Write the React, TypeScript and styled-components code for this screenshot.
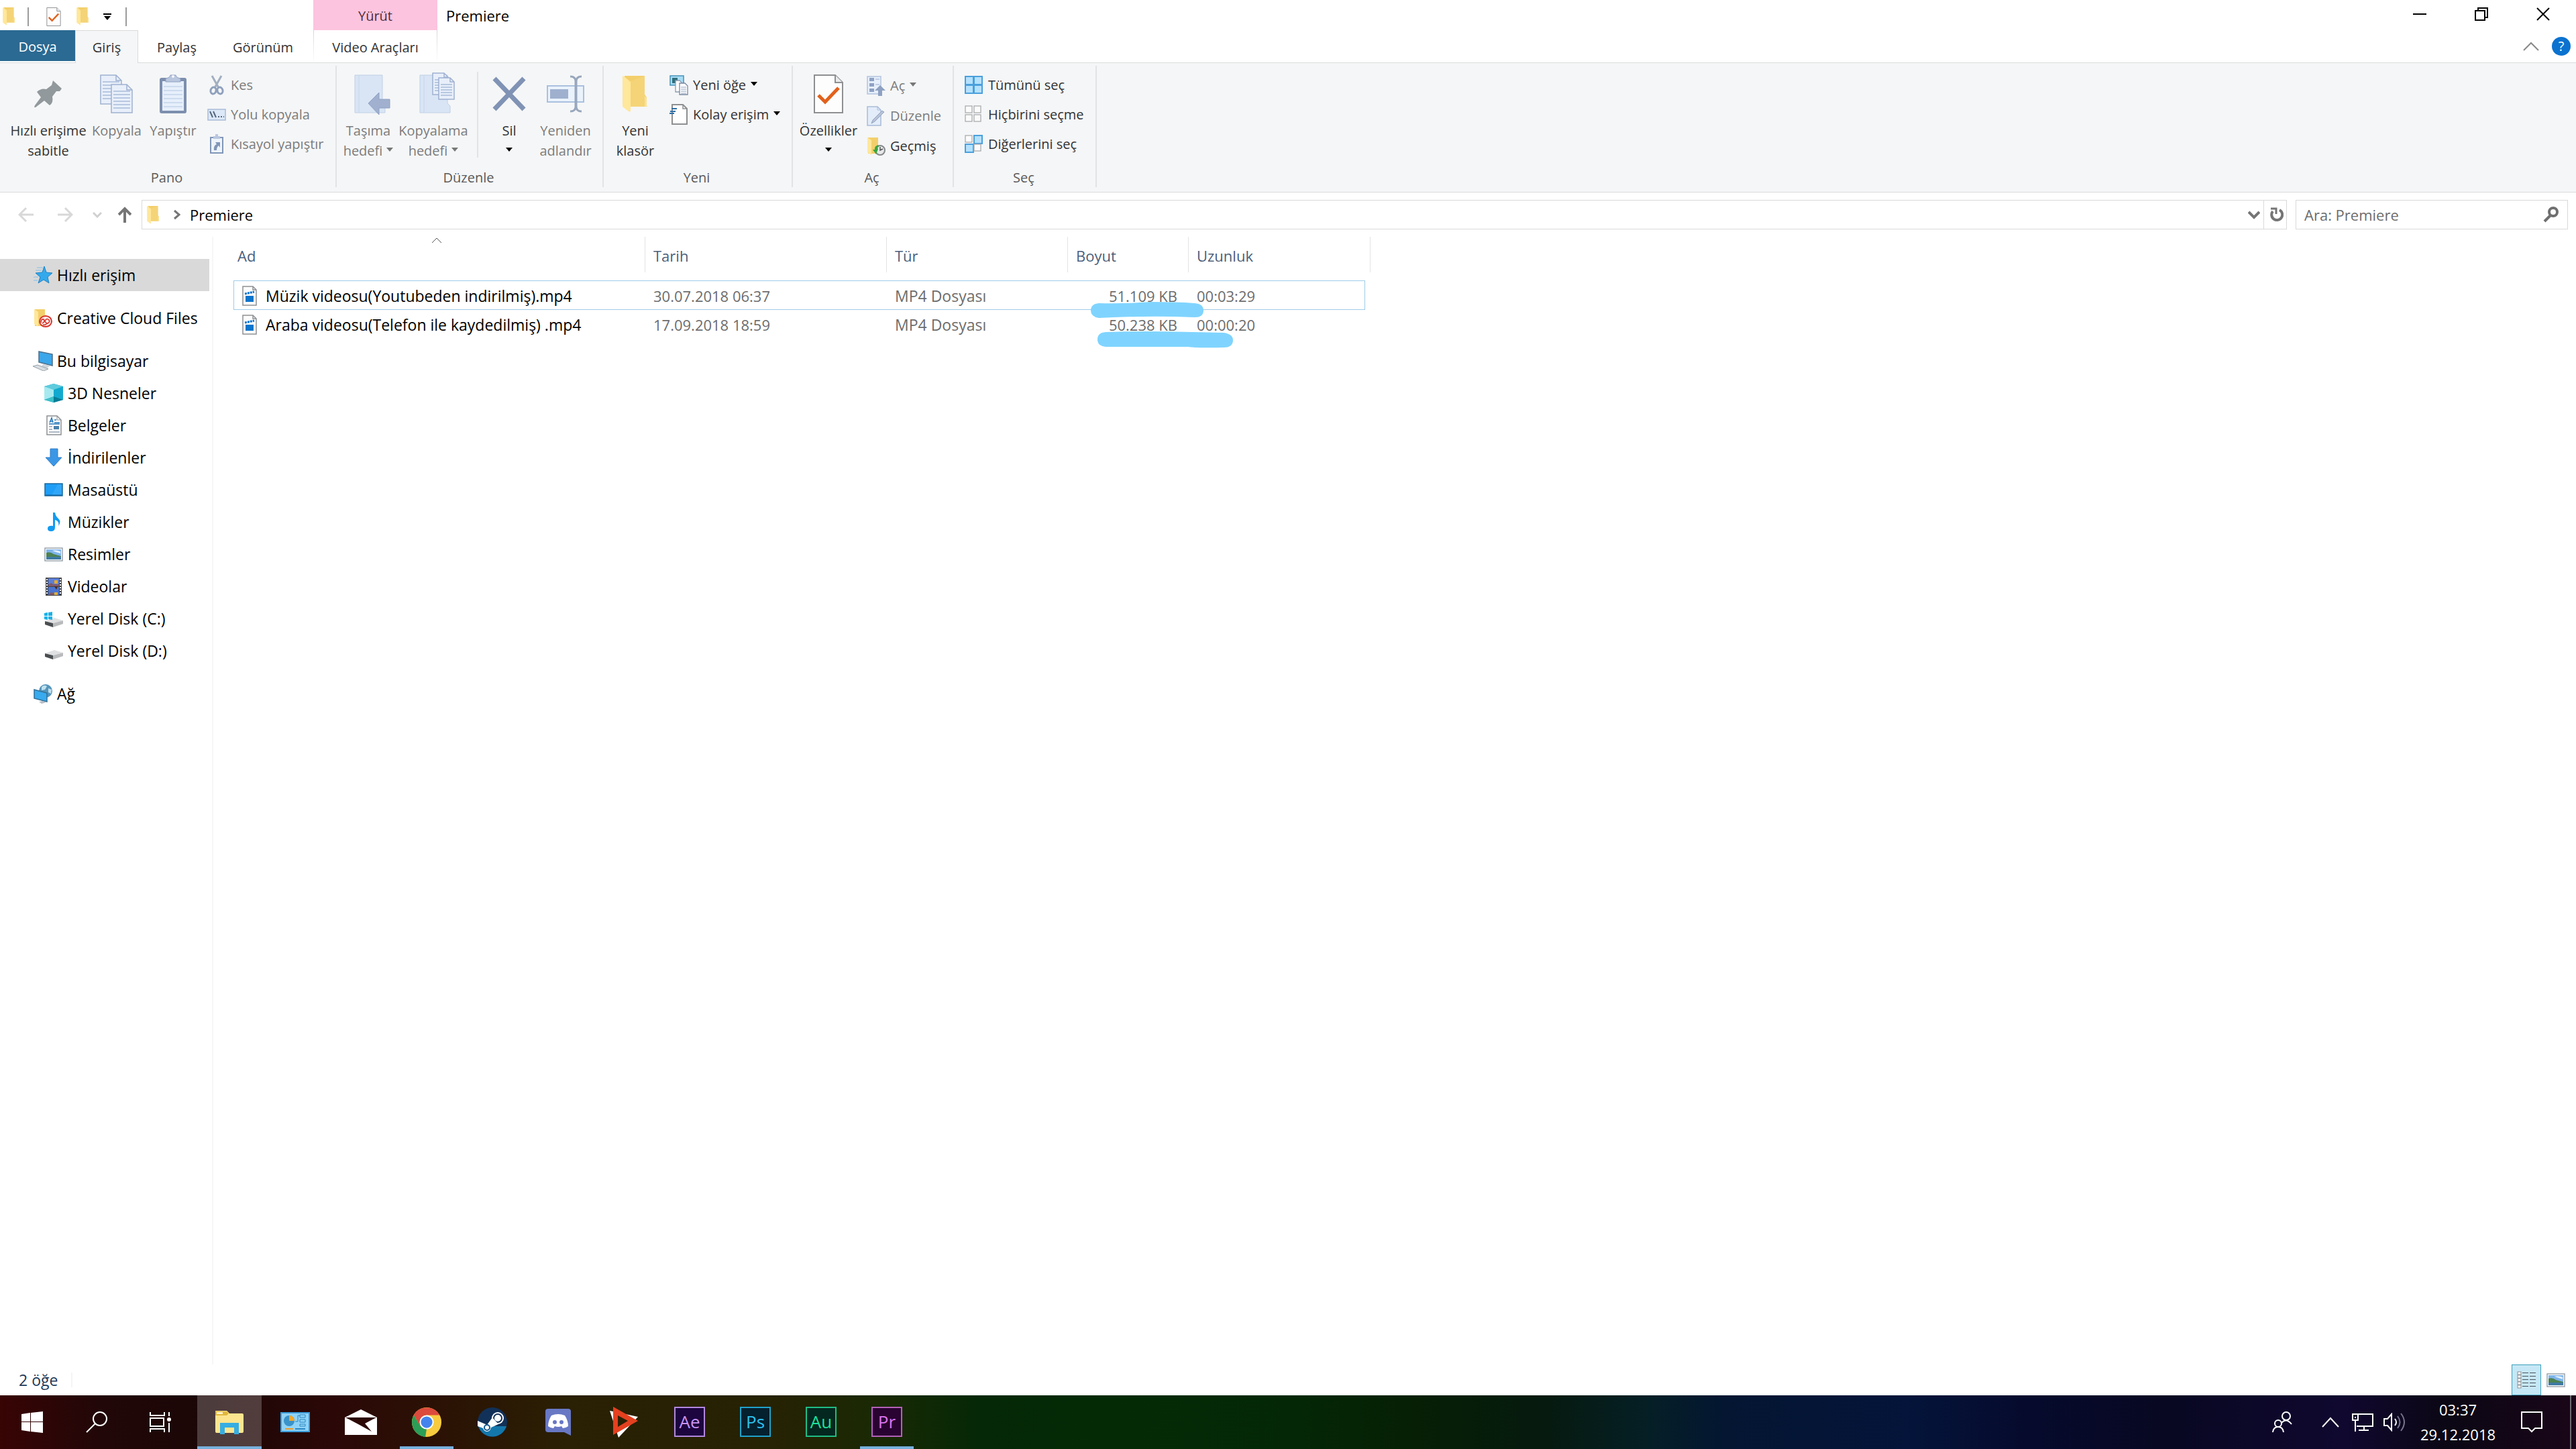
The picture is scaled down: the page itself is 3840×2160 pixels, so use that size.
import React, { ReactNode } from "react";
import styled, { createGlobalStyle, css } from "styled-components";

const GlobalStyle = createGlobalStyle`
  *, *::before, *::after { box-sizing: border-box; }
  html, body { margin: 0; background: #fff; }
  body, button, input, table {
    font-family: "Open Sans", "Noto Sans", "Segoe UI", sans-serif;
    font-size: 22px;
    line-height: 30px;
    color: #000;
  }
  button { border: 0; padding: 0; background: none; cursor: default; }
  svg { display: block; flex: none; }
`;

const Window = styled.div`
  display: flex;
  flex-direction: column;
  min-height: 100vh;
`;

/* ---------- icons ---------- */

type IconProps = { w: number; h: number; box?: string; children?: ReactNode };
const Icon = ({ w, h, box, children }: IconProps) => (
  <svg width={w} height={h} viewBox={box ?? `0 0 ${w} ${h}`} fill="none" aria-hidden="true">
    {children}
  </svg>
);

const FolderShape = () => (
  <>
    <path d="M3 0H33V28L36 32V45Q36 46 34 46H3Z" fill="#f3cf6b" />
    <path d="M12 8L33 0V46H12Z" fill="#f5d477" />
    <path d="M33 30L36 33V45L38 46H33Z" fill="#fbe293" />
    <path d="M1 0L12 9V51Q12 55 9 53L0 46V1Z" fill="#ffe79b" />
  </>
);
const Folder = ({ w, h }: { w: number; h: number }) => (
  <Icon w={w} h={h} box="0 0 38 55"><FolderShape /></Icon>
);

const CheckPage = ({ w, h }: { w: number; h: number }) => (
  <Icon w={w} h={h} box="0 0 44 58">
    <path d="M1 1H32L43 12V57H1Z" fill="#fdfdfd" stroke="#8d8f91" strokeWidth="2" />
    <path d="M32 1V12H43" fill="#e9eaeb" stroke="#8d8f91" strokeWidth="2" />
    <path d="M7 31L17 41L37 20" stroke="#e2611c" strokeWidth="5" />
  </Icon>
);

const Pin = () => (
  <Icon w={42} h={42}>
    <path d="M28 1L41 13L38 17L33 17L27 25Q29 34 23 38L15 31L2 41L0 41L1 38L10 26L4 18Q10 12 18 14L26 8Z" fill="#92999d" />
  </Icon>
);

const DocLines = ({ x, y, w, h, gap = 5 }: { x: number; y: number; w: number; h: number; gap?: number }) => {
  const lines: number[] = [];
  for (let i = 10; i < h - 3; i += gap) lines.push(y + i);
  const f = Math.round(w / 4);
  return (
    <>
      <path d={`M${x} ${y}H${x + w - f}L${x + w} ${y + f}V${y + h}H${x}Z`} fill="#e8effa" stroke="#9fb1d1" strokeWidth="1.5" />
      <path d={`M${x + w - f} ${y}V${y + f}H${x + w}`} stroke="#9fb1d1" strokeWidth="1.5" />
      {lines.map((l) => (
        <path key={l} d={`M${x + 3} ${l}H${x + w - 3}`} stroke="#a9bbd9" strokeWidth="1.5" />
      ))}
    </>
  );
};

const CopyBig = () => (
  <Icon w={50} h={60}>
    <DocLines x={1} y={2} w={31} h={43} />
    <DocLines x={17} y={16} w={31} h={42} />
  </Icon>
);

const PasteBig = () => (
  <Icon w={42} h={60}>
    <rect x="1" y="6" width="40" height="53" rx="3" fill="#7d8fae" />
    <rect x="5" y="11" width="32" height="44" fill="#e6effb" />
    {[19, 25, 31, 37, 43, 49].map((y) => <path key={y} d={`M7 ${y}H35`} stroke="#c5d4ea" strokeWidth="1.5" />)}
    <path d="M10 12V7Q16 6 17 2H25Q26 6 32 7V12Z" fill="#b9c6de" stroke="#8ea0c0" />
    <circle cx="21" cy="4" r="2" fill="#f5f6f7" />
  </Icon>
);

const Scissors = () => (
  <Icon w={28} h={30}>
    <path d="M7 1L17 19M21 1L11 19" stroke="#a3afc1" strokeWidth="3" />
    <ellipse cx="9" cy="23" rx="4" ry="5" stroke="#8fa0bd" strokeWidth="3" transform="rotate(15 9 23)" />
    <ellipse cx="19" cy="23" rx="4" ry="5" stroke="#8fa0bd" strokeWidth="3" transform="rotate(-15 19 23)" />
  </Icon>
);

const PathIcon = () => (
  <Icon w={28} h={18}>
    <rect x="1" y="1" width="26" height="16" fill="#dce8f7" stroke="#a9bbd9" strokeWidth="1.5" />
    <path d="M4 4L8 13M9 4L13 13" stroke="#56677f" strokeWidth="2" />
    <path d="M16 12h2M20 12h2M24 12h1" stroke="#56677f" strokeWidth="2" />
  </Icon>
);

const ShortcutIcon = () => (
  <Icon w={28} h={30}>
    <path d="M5 5H23V28H5Z" fill="#eef4fc" stroke="#8196b8" strokeWidth="2" />
    <path d="M9 7V3H12V0H16V3H19V7Z" fill="#b9c6de" />
    <path d="M10 24Q9 17 14 15L12 12H19V20L17 17Q14 19 14 24Z" fill="#8196b8" />
  </Icon>
);

const PaleFolder = ({ x }: { x: number }) => (
  <>
    <path d={`M${x} 4H${x + 41}V46L${x + 45} 50V60H${x}Z`} fill="#d9e5f5" stroke="#c0cfe6" />
    <path d={`M${x + 6} 4V60`} stroke="#c8d6ea" />
  </>
);
const MoveTo = () => (
  <Icon w={66} h={64} box="-12 0 66 64">
    <PaleFolder x={1} />
    <path d="M21 46L37 30V40H53V53H37V63Z" fill="#a0b0ce" stroke="#8fa2c3" />
  </Icon>
);
const CopyTo = () => (
  <Icon w={66} h={64} box="-12 0 66 64">
    <PaleFolder x={1} />
    <DocLines x={20} y={1} w={23} h={32} gap={4} />
    <DocLines x={29} y={8} w={23} h={32} gap={4} />
  </Icon>
);
const DeleteIcon = () => (
  <Icon w={50} h={52}>
    <path d="M3 3L47 49M47 3L3 49" stroke="#8093b5" strokeWidth="7" />
  </Icon>
);
const RenameIcon = () => (
  <Icon w={58} h={58}>
    <rect x="2" y="17" width="54" height="24" fill="#eaf2fc" stroke="#a9c0df" strokeWidth="2" />
    <rect x="6" y="22" width="27" height="14" fill="#9fb0cf" />
    <path d="M36 3Q44 3 44 10V48Q44 55 36 55M53 3Q45 3 45 10V48Q45 55 53 55" stroke="#98a7bd" strokeWidth="3" />
  </Icon>
);
const NewItem = () => (
  <Icon w={28} h={30}>
    <rect x="1" y="1" width="20" height="14" fill="#a8dcf5" stroke="#4792b8" strokeWidth="1.5" />
    <rect x="4" y="4" width="8" height="8" fill="#2f6f7c" />
    <path d="M9 8H15L19 12V25H9Z" fill="#fff" stroke="#8b9bb0" strokeWidth="1.3" />
    <path d="M15 12H23L27 16V29H15Z" fill="#fff" stroke="#7888a0" strokeWidth="1.3" />
    <path d="M17 18H25M17 21H25M17 24H25M17 27H25" stroke="#8ea3c0" />
  </Icon>
);
const EasyAccess = () => (
  <Icon w={28} h={32}>
    <path d="M4 1H20L26 7V30H4Z" fill="#fff" stroke="#8d8f91" strokeWidth="2" />
    <path d="M20 1V7H26" stroke="#8d8f91" strokeWidth="1.5" />
    <path d="M3 7H11M1 11H9M0 14H7" stroke="#2c6ea5" strokeWidth="2" />
  </Icon>
);
const OpenIcon = () => (
  <Icon w={28} h={30}>
    <rect x="1" y="1" width="20" height="26" fill="#e6effb" stroke="#b3c3de" strokeWidth="1.5" />
    <path d="M4 3h7v5H4zM4 11h7v5H4zM4 19h7v5H4z" fill="#8fa2c3" />
    <path d="M13 5h6M13 13h6" stroke="#b3c3de" strokeWidth="1.5" />
    <path d="M20 14L28 22H23V30H17V22H12Z" fill="#8ea1c2" />
  </Icon>
);
const EditIcon = () => (
  <Icon w={28} h={30}>
    <path d="M1 1H16L21 6V29H1Z" fill="#e3ecf9" stroke="#a9bbd9" strokeWidth="1.5" />
    <path d="M16 1V6H21" stroke="#a9bbd9" />
    <path d="M7 26L9 21L23 7L26 9L12 23Z" fill="#b7c3d8" stroke="#94a4be" />
  </Icon>
);
const HistoryIcon = () => (
  <Icon w={28} h={28}>
    <path d="M2 1H17V25H2Z" fill="#f3cf6b" />
    <path d="M1 1L7 5V27L1 23Z" fill="#ffe79b" />
    <circle cx="20" cy="20" r="7" fill="#e6e8ea" stroke="#85898c" strokeWidth="2" />
    <path d="M20 15V20L24 18" stroke="#555" strokeWidth="1.5" />
    <path d="M17 12Q11 14 12 19L9 19L14 26L17 18Q15 16 18 15Z" fill="#3aa640" />
  </Icon>
);
type Cell = "on" | "off";
const Grid4 = ({ cells }: { cells: Cell[] }) => (
  <Icon w={28} h={28}>
    {cells.map((c, i) => (
      <rect key={i} x={1 + (i % 2) * 13} y={1 + Math.floor(i / 2) * 13} width={c === "on" ? 12 : 10} height={c === "on" ? 12 : 10}
        fill={c === "on" ? "#b5e1fd" : "#fbfbfb"} stroke={c === "on" ? "#4aa0dc" : "#a9abad"} strokeWidth={c === "on" ? 2 : 1.3} />
    ))}
  </Icon>
);

const StarIcon = () => (
  <Icon w={28} h={28}>
    <path d="M16 1L19 10L28 11L21 17L23 26L15 21L7 26L10 17L3 11L13 10Z" fill="#33a9ec" stroke="#2283c4" />
    <path d="M5 3H14M3 7H12M0 17H7M0 22H6" stroke="#9fc7e4" strokeWidth="1.5" />
  </Icon>
);
const CloudFolder = () => (
  <Icon w={28} h={28}>
    <path d="M2 1H17V26H2Z" fill="#f3cf6b" />
    <path d="M1 1L7 5V27L1 23Z" fill="#ffe79b" />
    <ellipse cx="18" cy="19" rx="9" ry="8" fill="#fbeceb" stroke="#d8342b" strokeWidth="2" />
    <path d="M11 21Q11 15 15 16Q19 23 21 22Q25 20 23 17Q20 14 18 17Q15 21 13 22M14 24Q18 25 20 22" stroke="#d8342b" strokeWidth="1.6" />
  </Icon>
);
const ComputerIcon = () => (
  <Icon w={32} h={30}>
    <path d="M10 1L30 5V22L10 17Z" fill="#3ba6ea" stroke="#4b6f8c" strokeWidth="1.5" />
    <path d="M16 20L27 22L22 26L14 23Z" fill="#cfd6dc" />
    <path d="M1 23L8 21L24 27L17 30Z" fill="#d8dde1" stroke="#98a2aa" />
  </Icon>
);
const CubeIcon = () => (
  <Icon w={30} h={30}>
    <path d="M15 1L29 5V25L15 29L1 25V5Z" fill="#12a9cf" />
    <path d="M15 1L29 5L15 10L1 5Z" fill="#5fcbdc" />
    <path d="M1 5L15 10V20L1 25Z" fill="#a6eaf0" />
    <path d="M1 25L15 20V29Z" fill="#3fc0c9" />
    <path d="M29 25L15 20V29Z" fill="#067d96" />
  </Icon>
);
const DocumentIcon = () => (
  <Icon w={28} h={30}>
    <path d="M4 1H19L25 7V29H4Z" fill="#fff" stroke="#8d9093" strokeWidth="1.5" />
    <path d="M19 1V7H25" stroke="#8d9093" />
    <path d="M8 11L11 4L13 11M9 9H12M15 7H18M15 11H23M7 13H23" stroke="#2278b8" strokeWidth="1.5" />
    <rect x="14" y="16" width="8" height="5" fill="#4a83ad" />
    <path d="M7 17H12M7 21H12M7 25H23" stroke="#8fa1b2" strokeWidth="1.5" />
  </Icon>
);
const DownloadIcon = () => (
  <Icon w={28} h={28}>
    <path d="M9 1H20V14H26L14 27L2 14H9Z" fill="#3b97e6" stroke="#2f7fc6" />
  </Icon>
);
const DesktopIcon = () => (
  <Icon w={28} h={20}>
    <rect x="1" y="1" width="26" height="18" fill="#1e9ef6" stroke="#18699f" strokeWidth="1.5" />
    <path d="M20 2L11 18H26V2Z" fill="#30a6f8" />
    <path d="M2 18H26" stroke="#0f5c97" />
  </Icon>
);
const MusicIcon = () => (
  <Icon w={28} h={30}>
    <path d="M13 1H16Q17 7 21 10Q26 15 21 21Q23 14 16 12V23Q16 29 10 29Q5 29 5 25Q5 20 13 21Z" fill="#129bf0" />
  </Icon>
);
const PictureIcon = () => (
  <Icon w={28} h={21}>
    <rect x="1" y="1" width="26" height="19" fill="#fff" stroke="#9ba4ac" strokeWidth="1.5" />
    <rect x="3" y="3" width="22" height="15" fill="#7fb5ea" />
    <path d="M3 8Q9 6 14 10L25 13V15H3Z" fill="#4d8254" />
    <rect x="3" y="14" width="22" height="4" fill="#3f7aa3" />
    <path d="M12 5Q17 3 24 6V9Q17 7 12 5Z" fill="#e6f2fc" />
  </Icon>
);
const VideoIcon = () => (
  <Icon w={28} h={29}>
    <rect x="2" y="1" width="24" height="27" fill="#444" />
    <rect x="6" y="2" width="16" height="12" fill="#5d7fd6" />
    <rect x="6" y="15" width="16" height="12" fill="#4a74d0" />
    <path d="M6 12Q10 7 13 11H22V14H6ZM7 25Q11 21 14 25V27H7Z" fill="#7f5a6c" />
    <path d="M15 5H20V10H15ZM15 23H20V27H15Z" fill="#e3ad33" />
    <path d="M15 14L18 19L20 14Z" fill="#4c2b1c" />
    {[3, 7, 11, 15, 19, 23].map((y) => <path key={y} d={`M3 ${y}h2v2h-2zM23 ${y}h2v2h-2z`} fill="#fff" />)}
  </Icon>
);
const DiskIcon = ({ win }: { win?: boolean }) => (
  <Icon w={28} h={26}>
    <path d="M1 17L15 12L28 16L13 20Z" fill="#e0e1e2" />
    <path d="M1 17L13 20V26L1 22Z" fill="#4b4e50" />
    <path d="M13 20L28 16V21L13 26Z" fill="#b9bbbd" />
    {win && <path d="M0 5L5 4V9H0ZM6 4L12 3V9H6ZM0 10H5V15L0 14ZM6 10H12V15L6 14Z" fill="#18b1e8" />}
  </Icon>
);
const NetworkIcon = () => (
  <Icon w={28} h={30}>
    <circle cx="18" cy="11" r="10" fill="#5595bb" />
    <path d="M12 5Q16 1 20 4L17 9L12 10ZM22 7L27 9L26 15L22 13Z" fill="#bfe0ee" />
    <path d="M1 9L20 14V27L1 22Z" fill="#38aaee" stroke="#316f97" strokeWidth="1.5" />
    <path d="M8 27L14 26L19 28L12 30Z" fill="#b5bdc4" />
  </Icon>
);
const FileIcon = () => (
  <Icon w={24} h={30}>
    <path d="M2 1H17L22 6V29H2Z" fill="#fcfcfc" stroke="#8d9093" strokeWidth="1.5" />
    <path d="M17 1V6H22" stroke="#8d9093" strokeWidth="1.5" />
    <rect x="6" y="15" width="12" height="9" fill="#0b74cb" />
    <path d="M5 12L19 9" stroke="#0b74cb" strokeWidth="3" strokeDasharray="3 1" />
  </Icon>
);

const Stroke = ({ w, h, d, color, width }: { w: number; h: number; d: string; color: string; width: number }) => (
  <Icon w={w} h={h}><path d={d} stroke={color} strokeWidth={width} /></Icon>
);

/* ---------- title bar and tabs ---------- */

const TitleBar = styled.header`
  display: flex;
  height: 45px;
  padding-right: 3px;
`;
const QuickAccess = styled.div`
  display: flex;
  align-items: center;
  width: 467px;
  padding: 4px 0 0 4px;
`;
const QuickButton = styled.button<{ $w: number }>`
  display: flex;
  justify-content: center;
  width: ${(p) => p.$w}px;
`;
const QuickLine = styled.span<{ $before: number }>`
  width: 2px;
  height: 38px;
  margin: 0 16px 0 ${(p) => p.$before}px;
  background: #9b9b9b;
  max-height: 28px;
`;
const ContextHeader = styled.div`
  width: 185px;
  background: #fcc4de;
  color: #4d2c3c;
  font-size: 20px;
  line-height: 47px;
  text-align: center;
`;
const Title = styled.h1`
  flex: 1;
  margin: 0;
  padding-left: 13px;
  font-size: 22px;
  font-weight: 400;
  line-height: 47px;
`;
const WindowButton = styled.button`
  display: flex;
  align-items: center;
  justify-content: center;
  width: 92px;
  height: 42px;
`;

const TabRow = styled.nav`
  display: flex;
  height: 49px;
  border-bottom: 1px solid #dadbdc;
`;
const Tab = styled.button<{ $w: number; $kind?: "file" | "active" | "context" }>`
  width: ${(p) => p.$w}px;
  height: 48px;
  padding-top: 3px;
  font-size: 20px;
  color: #333;
  ${(p) => p.$kind === "file" && css`height: 46px; background: #2b6a92; color: #fff;`}
  ${(p) => p.$kind === "active" && css`
    height: 49px;
    padding-top: 1px;
    background: #f5f6f7;
    border: 1px solid #dadbdc;
    border-bottom: 0;
  `}
  ${(p) => p.$kind === "context" && css`
    margin-left: 4px;
    border: 1px solid;
    border-width: 0 1px;
    border-image: linear-gradient(#d5d5d5, #fff) 1;
  `}
`;
const TabEnd = styled.div`
  display: flex;
  align-items: center;
  gap: 19px;
  margin-left: auto;
  padding-right: 8px;
`;
const Help = styled.button`
  width: 28px;
  height: 28px;
  border-radius: 50%;
  background: #0b72cf;
  color: #fff;
  font-size: 20px;
  line-height: 28px;
`;

/* ---------- ribbon ---------- */

const Ribbon = styled.section`
  display: flex;
  height: 193px;
  padding: 4px 0 7px;
  background: #f5f6f7;
  border-bottom: 1px solid #dadbdc;
`;
const Group = styled.div<{ $w: number }>`
  display: flex;
  flex-direction: column;
  width: ${(p) => p.$w}px;
  border-right: 2px solid #e2e3e4;
`;
const GroupBody = styled.div<{ $pad?: number }>`
  display: flex;
  flex: 1;
  padding-left: ${(p) => p.$pad ?? 0}px;
`;
const GroupName = styled.div`
  padding-right: 3px;
  color: #5a5a5a;
  font-size: 20px;
  line-height: 28px;
  text-align: center;
`;
const BigButton = styled.button<{ $w: number; $muted?: boolean }>`
  display: flex;
  flex-direction: column;
  align-items: center;
  width: ${(p) => p.$w}px;
  padding-top: 10px;
  color: ${(p) => (p.$muted ? "#7c7c7c" : "#333")};
  font-size: 20px;
  white-space: nowrap;
`;
const BigIcon = styled.span`
  display: flex;
  align-items: center;
  justify-content: center;
  height: 64px;
  margin-bottom: 8px;
`;
const LabelLine = styled.span`
  display: flex;
  align-items: center;
  justify-content: center;
  gap: 6px;
  height: 30px;
`;
const Caret = styled.span<{ $muted?: boolean }>`
  margin-bottom: 4px;
  border: 5px solid transparent;
  border-top: 6px solid ${(p) => (p.$muted ? "#777" : "#000")};
  border-bottom: 0;
`;
const SmallColumn = styled.div<{ $indent: number; $row: number }>`
  display: grid;
  grid-auto-rows: ${(p) => p.$row}px;
  align-content: start;
  padding-top: 7px;
  margin-left: ${(p) => p.$indent}px;
`;
const SmallButton = styled.button<{ $muted?: boolean }>`
  display: flex;
  align-items: center;
  gap: 7px;
  color: ${(p) => (p.$muted ? "#7c7c7c" : "#333")};
  font-size: 20px;
  white-space: nowrap;
`;
const InnerLine = styled.span`
  width: 2px;
  height: 128px;
  margin: 9px 8px 0 15px;
  background: #e2e3e4;
`;

type BigProps = { w: number; icon: ReactNode; lines: string[]; muted?: boolean; caret?: boolean };
const Big = ({ w, icon, lines, muted, caret }: BigProps) => (
  <BigButton $w={w} $muted={muted} disabled={muted}>
    <BigIcon>{icon}</BigIcon>
    {lines.map((l, i) => (
      <LabelLine key={i}>
        {l}
        {caret && i === lines.length - 1 && <Caret $muted={muted} />}
      </LabelLine>
    ))}
  </BigButton>
);
type SmallProps = { icon: ReactNode; label: string; muted?: boolean; caret?: boolean };
const Small = ({ icon, label, muted, caret }: SmallProps) => (
  <SmallButton $muted={muted} disabled={muted}>
    {icon}
    {label}
    {caret && <Caret $muted={muted} />}
  </SmallButton>
);

/* ---------- address row ---------- */

const AddressRow = styled.div`
  display: flex;
  align-items: center;
  padding: 11px 12px 11px 10px;
`;
const NavButton = styled.button<{ $w: number }>`
  display: flex;
  align-items: center;
  justify-content: center;
  width: ${(p) => p.$w}px;
  height: 44px;
`;
const AddressBox = styled.div`
  display: flex;
  align-items: center;
  flex: 1;
  height: 44px;
  margin: 0 13px 0 2px;
  padding-left: 7px;
  border: 1px solid #d9d9d9;
`;
const Crumb = styled.button`
  display: flex;
  align-items: center;
  gap: 14px;
  margin-left: 21px;
`;
const AddressEnd = styled.div`
  display: flex;
  margin-left: auto;
`;
const Refresh = styled(NavButton)`
  padding-left: 4px;
  border-left: 1px solid #d9d9d9;
`;
const Dropdown = styled(NavButton)`
  padding-left: 4px;
`;
const SearchBox = styled.label`
  display: flex;
  align-items: center;
  width: 406px;
  height: 44px;
  padding: 0 12px;
  border: 1px solid #d9d9d9;
`;
const SearchInput = styled.input`
  flex: 1;
  min-width: 0;
  padding: 0;
  border: 0;
  outline: 0;
  background: none;
  &::placeholder { color: #6d6d6d; opacity: 1; }
`;

/* ---------- body ---------- */

const Body = styled.div`
  display: flex;
  flex: 1;
`;
const Sidebar = styled.nav`
  width: 318px;
  padding-top: 33px;
  border-right: 2px solid #f6f6f6;
`;
const SideItem = styled.a<{ $level?: number; $selected?: boolean; $gap?: boolean }>`
  display: flex;
  align-items: center;
  gap: 5px;
  height: 48px;
  margin: ${(p) => (p.$gap ? "16px" : "0")} 4px 0 0;
  padding-left: ${(p) => (p.$level ? 64 : 48)}px;
  background: ${(p) => (p.$selected ? "#d9d9d9" : "none")};
  color: #000;
  font-size: 23px;
  text-decoration: none;
  white-space: nowrap;
`;
const SideIcon = styled.span`
  display: flex;
  justify-content: center;
  width: 32px;
`;

const Content = styled.main`
  flex: 1;
  padding-left: 30px;
`;
const FileTable = styled.table`
  width: 1695px;
  table-layout: fixed;
  border-spacing: 0;
  tbody::before { content: ""; display: block; height: 12px; }
`;
const Head = styled.th<{ $w: number; $pad?: number }>`
  position: relative;
  width: ${(p) => p.$w}px;
  height: 53px;
  padding: 3px 0 0 ${(p) => p.$pad ?? 12}px;
  border-right: 1px solid #e3e3e3;
  color: #4c607a;
  font-weight: 400;
  text-align: left;
`;
const SortMark = styled.span`
  position: absolute;
  top: 1px;
  left: 50%;
  margin-left: -12px;
`;
const Row = styled.tr<{ $focused?: boolean }>`
  position: relative;
  ${(p) => p.$focused && css`
    &::after {
      content: "";
      position: absolute;
      inset: 0 8px -1px 0;
      border: 1px solid #9fcbe6;
    }
  `}
`;
const Data = styled.td<{ $size?: boolean; $text?: boolean }>`
  height: 43px;
  padding: ${(p) => (p.$size ? "2px 17px 0 0" : "2px 0 0 12px")};
  color: #6d6d6d;
  font-size: ${(p) => (p.$text ? 23 : 22)}px;
  text-align: ${(p) => (p.$size ? "right" : "left")};
  white-space: nowrap;
`;
const FileName = styled.span`
  display: flex;
  align-items: center;
  gap: 12px;
  color: #000;
`;
const SizeText = styled.span`
  position: relative;
`;
const Marker = styled.span<{ $left: number; $top: number }>`
  position: absolute;
  left: ${(p) => p.$left}px;
  top: ${(p) => p.$top}px;
  z-index: 1;
`;

const StatusBar = styled.footer`
  display: flex;
  align-items: center;
  height: 46px;
  padding: 0 16px 0 28px;
  color: #1e3957;
  font-size: 23px;
`;
const StatusLine = styled.span`
  width: 2px;
  height: 22px;
  margin-left: 20px;
  background: #f5f5f5;
`;
const ViewButtons = styled.div`
  display: flex;
  align-items: center;
  gap: 8px;
  margin-left: auto;
`;
const DetailsView = styled.button`
  display: flex;
  align-items: center;
  justify-content: center;
  width: 44px;
  height: 46px;
  background: #c6e7f5;
  border: 1px solid #3da0bd;
`;

/* ---------- taskbar ---------- */

const Taskbar = styled.div`
  display: flex;
  height: 80px;
  background: linear-gradient(
    90deg,
    #380404 0%, #210708 4%, #1b0606 8%, #2b0807 13%, #2b1404 18%, #2a2004 22%,
    #262204 30%, #1a2904 34%, #052806 38%, #032a05 43%, #042806 50%, #061f05 55%,
    #061a0f 60%, #051f26 64%, #041632 67%, #04143a 74%, #060a2c 79%, #080822 84%,
    #10082f 91%, #0b0714 95%, #1a0618 100%
  );
`;
const TaskButton = styled.button<{ $w?: number; $active?: boolean }>`
  display: flex;
  align-items: center;
  justify-content: center;
  width: ${(p) => p.$w ?? 96}px;
  height: 80px;
  background: ${(p) => (p.$active ? "rgba(255, 255, 255, 0.22)" : "none")};
`;
const Apps = styled.div`
  display: flex;
  gap: 2px;
  margin-left: 6px;
`;
const Running = styled(TaskButton)<{ $wide?: boolean }>`
  position: relative;
  &::after {
    content: "";
    position: absolute;
    bottom: 0;
    left: ${(p) => (p.$wide ? 0 : 8)}px;
    right: ${(p) => (p.$wide ? 0 : 8)}px;
    height: 4px;
    background: #76b0dc;
  }
`;
const AdobeTile = styled.span<{ $line: string; $ink: string; $fill: string }>`
  width: 46px;
  height: 45px;
  margin-bottom: 2px;
  border: 2px solid ${(p) => p.$line};
  background: ${(p) => p.$fill};
  color: ${(p) => p.$ink};
  font-size: 26px;
  line-height: 40px;
  text-align: center;
`;
const Tray = styled.div`
  display: flex;
  align-items: center;
  margin-left: auto;
`;
const Clock = styled.time`
  width: 150px;
  color: #fff;
  line-height: 37px;
  text-align: center;
`;
const Notifications = styled(TaskButton)`
  padding-right: 22px;
`;
const ShowDesktop = styled.button`
  width: 9px;
  height: 80px;
  border-left: 2px solid #6d6a72;
`;

const WHITE = "#fff";

const sideItems: { label: string; icon: ReactNode; level?: number; gap?: boolean; selected?: boolean }[] = [
  { label: "Hızlı erişim", icon: <StarIcon />, selected: true },
  { label: "Creative Cloud Files", icon: <CloudFolder />, gap: true },
  { label: "Bu bilgisayar", icon: <ComputerIcon />, gap: true },
  { label: "3D Nesneler", icon: <CubeIcon />, level: 1 },
  { label: "Belgeler", icon: <DocumentIcon />, level: 1 },
  { label: "İndirilenler", icon: <DownloadIcon />, level: 1 },
  { label: "Masaüstü", icon: <DesktopIcon />, level: 1 },
  { label: "Müzikler", icon: <MusicIcon />, level: 1 },
  { label: "Resimler", icon: <PictureIcon />, level: 1 },
  { label: "Videolar", icon: <VideoIcon />, level: 1 },
  { label: "Yerel Disk (C:)", icon: <DiskIcon win />, level: 1 },
  { label: "Yerel Disk (D:)", icon: <DiskIcon />, level: 1 },
  { label: "Ağ", icon: <NetworkIcon />, gap: true },
];

const files = [
  {
    name: "Müzik videosu(Youtubeden indirilmiş).mp4", date: "30.07.2018 06:37", size: "51.109 KB", length: "00:03:29",
    marker: { left: -27, top: 24, w: 168, d: "M12 2Q50 3 90 0Q130 0 155 2Q168 3 168 13Q168 23 155 23Q90 20 12 24Q0 22 0 13Q0 3 12 2Z" },
  },
  {
    name: "Araba videosu(Telefon ile kaydedilmiş) .mp4", date: "17.09.2018 18:59", size: "50.238 KB", length: "00:00:20",
    marker: { left: -17, top: 25, w: 202, d: "M12 1Q70 -1 140 1L188 2Q202 4 202 13Q202 24 188 24Q150 25 135 23H12Q0 22 0 12Q0 2 12 1Z" },
  },
];

export default function App() {
  return (
    <>
      <GlobalStyle />
      <Window>
        <TitleBar>
          <QuickAccess>
            <Folder w={19} h={27} />
            <QuickLine $before={18} />
            <QuickButton $w={42} aria-label="Özellikler"><CheckPage w={22} h={28} /></QuickButton>
            <QuickButton $w={44} aria-label="Yeni klasör"><Folder w={19} h={27} /></QuickButton>
            <QuickButton $w={30} aria-label="Özelleştir">
              <Icon w={12} h={10}><path d="M0 1H12" stroke="#000" strokeWidth="2" /><path d="M1 4H11L6 10Z" fill="#000" /></Icon>
            </QuickButton>
            <QuickLine $before={12} />
          </QuickAccess>
          <ContextHeader>Yürüt</ContextHeader>
          <Title>Premiere</Title>
          <WindowButton aria-label="Simge durumuna küçült"><Stroke w={20} h={20} d="M0 10H20" color="#000" width={2} /></WindowButton>
          <WindowButton aria-label="Önceki boyut"><Stroke w={20} h={20} d="M1 5H15V19H1ZM5 5V1H19V15H15" color="#000" width={2} /></WindowButton>
          <WindowButton aria-label="Kapat"><Stroke w={20} h={20} d="M1 1L19 19M19 1L1 19" color="#000" width={2} /></WindowButton>
        </TitleBar>
        <TabRow>
          <Tab $w={112} $kind="file">Dosya</Tab>
          <Tab $w={94} $kind="active">Giriş</Tab>
          <Tab $w={115}>Paylaş</Tab>
          <Tab $w={142}>Görünüm</Tab>
          <Tab $w={185} $kind="context">Video Araçları</Tab>
          <TabEnd>
            <Stroke w={24} h={14} d="M1 13L12 2L23 13" color="#8a8a8a" width={2} />
            <Help aria-label="Yardım">?</Help>
          </TabEnd>
        </TabRow>

        <Ribbon>
          <Group $w={502}>
            <GroupBody $pad={12}>
              <Big w={120} icon={<Pin />} lines={["Hızlı erişime", "sabitle"]} />
              <Big w={84} muted icon={<CopyBig />} lines={["Kopyala"]} />
              <Big w={84} muted icon={<PasteBig />} lines={["Yapıştır"]} />
              <SmallColumn $indent={9} $row={44}>
                <Small muted icon={<Scissors />} label="Kes" />
                <Small muted icon={<PathIcon />} label="Yolu kopyala" />
                <Small muted icon={<ShortcutIcon />} label="Kısayol yapıştır" />
              </SmallColumn>
            </GroupBody>
            <GroupName>Pano</GroupName>
          </Group>
          <Group $w={398}>
            <GroupBody>
              <Big w={94} muted caret icon={<MoveTo />} lines={["Taşıma", "hedefi"]} />
              <Big w={100} muted caret icon={<CopyTo />} lines={["Kopyalama", "hedefi"]} />
              <InnerLine />
              <Big w={76} caret icon={<DeleteIcon />} lines={["Sil", ""]} />
              <Big w={92} muted icon={<RenameIcon />} lines={["Yeniden", "adlandır"]} />
            </GroupBody>
            <GroupName>Düzenle</GroupName>
          </Group>
          <Group $w={282}>
            <GroupBody $pad={2}>
              <Big w={90} icon={<Folder w={38} h={55} />} lines={["Yeni", "klasör"]} />
              <SmallColumn $indent={6} $row={44}>
                <Small caret icon={<NewItem />} label="Yeni öğe" />
                <Small caret icon={<EasyAccess />} label="Kolay erişim" />
              </SmallColumn>
            </GroupBody>
            <GroupName>Yeni</GroupName>
          </Group>
          <Group $w={240}>
            <GroupBody>
              <Big w={106} caret icon={<CheckPage w={44} h={58} />} lines={["Özellikler", ""]} />
              <SmallColumn $indent={4} $row={45}>
                <Small muted caret icon={<OpenIcon />} label="Aç" />
                <Small muted icon={<EditIcon />} label="Düzenle" />
                <Small icon={<HistoryIcon />} label="Geçmiş" />
              </SmallColumn>
            </GroupBody>
            <GroupName>Aç</GroupName>
          </Group>
          <Group $w={213}>
            <GroupBody>
              <SmallColumn $indent={16} $row={44}>
                <Small icon={<Grid4 cells={["on", "on", "on", "on"]} />} label="Tümünü seç" />
                <Small icon={<Grid4 cells={["off", "off", "off", "off"]} />} label="Hiçbirini seçme" />
                <Small icon={<Grid4 cells={["off", "on", "on", "off"]} />} label="Diğerlerini seç" />
              </SmallColumn>
            </GroupBody>
            <GroupName>Seç</GroupName>
          </Group>
        </Ribbon>

        <AddressRow>
          <NavButton $w={58} aria-label="Geri"><Stroke w={24} h={24} d="M23 12H3M12 2L2 12L12 22" color="#d8d8d8" width={3} /></NavButton>
          <NavButton $w={58} aria-label="İleri"><Stroke w={24} h={24} d="M1 12H21M12 2L22 12L12 22" color="#d8d8d8" width={3} /></NavButton>
          <NavButton $w={37} aria-label="Son konumlar"><Stroke w={14} h={10} d="M1 2L7 8L13 2" color="#d0d0d0" width={3} /></NavButton>
          <NavButton $w={46} aria-label="Yukarı"><Stroke w={20} h={24} d="M10 24V3M1 12L10 3L19 12" color="#757575" width={4} /></NavButton>
          <AddressBox>
            <Folder w={19} h={27} />
            <Crumb>
              <Stroke w={10} h={16} d="M1 2L8 8L1 14" color="#757575" width={3} />
              Premiere
            </Crumb>
            <AddressEnd>
              <Dropdown $w={32} aria-label="Önceki konumlar"><Stroke w={18} h={14} d="M1 3L9 11L17 3" color="#757575" width={4} /></Dropdown>
              <Refresh $w={34} aria-label="Yenile">
                <Icon w={20} h={24}>
                  <path d="M14 5A8 8 0 1 1 4 7" stroke="#757575" strokeWidth="4" />
                  <path d="M1 3H9V11" stroke="#757575" strokeWidth="3" />
                </Icon>
              </Refresh>
            </AddressEnd>
          </AddressBox>
          <SearchBox>
            <SearchInput type="text" placeholder="Ara: Premiere" aria-label="Ara: Premiere" />
            <Icon w={24} h={24}>
              <circle cx="15" cy="8" r="6" stroke="#6f6f6f" strokeWidth="4" />
              <path d="M11 13L2 22" stroke="#6f6f6f" strokeWidth="4" />
            </Icon>
          </SearchBox>
        </AddressRow>

        <Body>
          <Sidebar>
            {sideItems.map((s) => (
              <SideItem key={s.label} href="#" $level={s.level} $gap={s.gap} $selected={s.selected}>
                <SideIcon>{s.icon}</SideIcon>
                {s.label}
              </SideItem>
            ))}
          </Sidebar>
          <Content>
            <FileTable>
              <thead>
                <tr>
                  <Head $w={614} $pad={6}>
                    Ad
                    <SortMark><Stroke w={16} h={9} d="M1 8L8 1L15 8" color="#555" width={1} /></SortMark>
                  </Head>
                  <Head $w={360}>Tarih</Head>
                  <Head $w={270}>Tür</Head>
                  <Head $w={180}>Boyut</Head>
                  <Head $w={271}>Uzunluk</Head>
                </tr>
              </thead>
              <tbody>
                {files.map((f, i) => (
                  <Row key={f.name} $focused={i === 0}>
                    <Data $text><FileName><FileIcon />{f.name}</FileName></Data>
                    <Data>{f.date}</Data>
                    <Data $text>MP4 Dosyası</Data>
                    <Data $size>
                      <SizeText>
                        {f.size}
                        <Marker $left={f.marker.left} $top={f.marker.top}>
                          <Icon w={f.marker.w} h={25}><path d={f.marker.d} fill="#7fd4ff" /></Icon>
                        </Marker>
                      </SizeText>
                    </Data>
                    <Data>{f.length}</Data>
                  </Row>
                ))}
              </tbody>
            </FileTable>
          </Content>
        </Body>

        <StatusBar>
          2 öğe
          <StatusLine />
          <ViewButtons>
            <DetailsView aria-label="Ayrıntılar">
              <Icon w={28} h={26}>
                {[1, 6, 11, 16, 21].map((y) => (
                  <g key={y}>
                    <rect x="1" y={y} width="5" height="4" fill="#fff" stroke="#8a8f93" />
                    <path d={`M8 ${y + 1}H17V${y + 2}H8ZM19 ${y + 1}H28V${y + 2}H19Z`} fill="#4b555c" />
                  </g>
                ))}
              </Icon>
            </DetailsView>
            <button aria-label="Büyük simgeler"><PictureIcon /></button>
          </ViewButtons>
        </StatusBar>

        <Taskbar>
          <TaskButton aria-label="Başlat">
            <Icon w={32} h={32}><path d="M0 4L13 2V15H0ZM14 2L32 0V15H14ZM0 16H13V30L0 28ZM14 16H32V32L14 30Z" fill={WHITE} /></Icon>
          </TaskButton>
          <TaskButton aria-label="Ara">
            <Icon w={32} h={32}><circle cx="21" cy="11" r="10" stroke={WHITE} strokeWidth="2" /><path d="M14 18L1 31" stroke={WHITE} strokeWidth="2" /></Icon>
          </TaskButton>
          <TaskButton aria-label="Görev görünümü">
            <Icon w={34} h={30}>
              <path d="M1 0V5H22V0M1 30V25H22V30M1 9H21V21H1ZM29 0V6M29 16V30" stroke={WHITE} strokeWidth="2" />
              <circle cx="29" cy="11" r="3" fill={WHITE} />
            </Icon>
          </TaskButton>
          <Apps>
            <Running $active $wide aria-label="Dosya Gezgini">
              <Icon w={44} h={36}>
                <path d="M1 1H18L22 5H1Z" fill="#dcb23c" />
                <path d="M1 3Q1 1 3 1H18L22 5H41Q43 5 43 7V32Q43 34 41 34H3Q1 34 1 32Z" fill="#fde58f" />
                <path d="M1 2H18L21 5L18 8H1Z" fill="#e0b73d" />
                <path d="M3 3H12V6H3Z" fill="#fff3c8" />
                <path d="M8 36V19H36V36H29V26H15V36Z" fill="#36aee3" />
              </Icon>
            </Running>
            <TaskButton aria-label="Denetim Masası">
              <Icon w={44} h={30}>
                <rect x="1" y="1" width="42" height="28" fill="#8fd3f7" stroke="#3b9bd8" strokeWidth="2" />
                <circle cx="13" cy="13" r="8" fill="#3a93c9" />
                <path d="M13 13V5A8 8 0 0 1 21 13Z" fill="#f4a62a" />
                <path d="M22 14H26V5H29M29 4h8v4h-8zM29 11h8v4h-8zM29 18h8v3h-8z" stroke="#2c86bf" />
                <path d="M7 25H19" stroke="#ee9a2a" strokeWidth="2" /><path d="M22 25H37" stroke="#2a87c4" strokeWidth="2" />
              </Icon>
            </TaskButton>
            <TaskButton aria-label="Posta">
              <Icon w={48} h={38}>
                <path d="M0 12L24 0L48 12V38H0Z" fill={WHITE} />
                <path d="M1 12H47L30 21L40 33L20 22Z" fill="#2c0806" />
              </Icon>
            </TaskButton>
            <Running aria-label="Chrome">
              <Icon w={46} h={46} box="0 0 48 48">
                <circle cx="24" cy="24" r="23" fill="#f8cb3e" />
                <path d="M4 13L14 30L24 24V13H44A23 23 0 0 0 4 13Z" fill="#dc4a3d" />
                <path d="M4 13L14 30L24 34L22 47A23 23 0 0 1 4 13Z" fill="#2b9e57" />
                <circle cx="24" cy="24" r="11" fill="#fff" /><circle cx="24" cy="24" r="9" fill="#4383ee" />
              </Icon>
            </Running>
            <TaskButton aria-label="Steam">
              <Icon w={46} h={44}>
                <circle cx="23" cy="22" r="22" fill="#123158" />
                <path d="M2 28A22 22 0 0 0 44 28Z" fill="#1477ab" />
                <circle cx="31" cy="16" r="9" fill="#fff" /><circle cx="31" cy="16" r="6" stroke="#123158" strokeWidth="2" fill="#fff" />
                <path d="M1 20L15 26L23 15L32 25L21 30Q20 36 14 36Q10 35 9 31L1 28Z" fill="#fff" />
                <circle cx="15" cy="30" r="4" stroke="#16568a" strokeWidth="2" />
              </Icon>
            </TaskButton>
            <TaskButton aria-label="Discord">
              <Icon w={40} h={42}>
                <path d="M5 1H35Q39 1 39 5V41L29 36H5Q1 36 1 32V5Q1 1 5 1Z" fill="#6878c4" />
                <path d="M10 11Q20 7 30 11Q35 19 35 27Q31 30 27 30L25 27Q20 29 15 27L13 30Q9 30 5 27Q5 19 10 11Z" fill="#fff" />
                <ellipse cx="15" cy="21" rx="3" ry="3" fill="#6878c4" /><ellipse cx="25" cy="21" rx="3" ry="3" fill="#6878c4" />
              </Icon>
            </TaskButton>
            <TaskButton aria-label="Oynatıcı">
              <Icon w={44} h={48}>
                <path d="M1 7L43 16L14 47Z" fill="#fff" />
                <path d="M6 1L43 22L6 43Z" fill="#e5401f" />
                <path d="M13 14V31L28 22Z" fill="#2a2004" />
              </Icon>
            </TaskButton>
            <TaskButton><AdobeTile $line="#b287e0" $ink="#c894f5" $fill="#1d0540">Ae</AdobeTile></TaskButton>
            <TaskButton><AdobeTile $line="#1fa2cc" $ink="#2cc0ef" $fill="#05202e">Ps</AdobeTile></TaskButton>
            <TaskButton><AdobeTile $line="#1fbd85" $ink="#1fe09d" $fill="#04281f">Au</AdobeTile></TaskButton>
            <Running><AdobeTile $line="#b361b8" $ink="#dd74ee" $fill="#290331">Pr</AdobeTile></Running>
          </Apps>
          <Tray>
            <TaskButton $w={106} aria-label="Kişiler">
              <Icon w={30} h={32}>
                <circle cx="21" cy="7" r="6" stroke={WHITE} strokeWidth="2" /><path d="M14 17Q21 9 29 19" stroke={WHITE} strokeWidth="2" />
                <circle cx="9" cy="18" r="5" stroke={WHITE} strokeWidth="2" /><path d="M1 31Q2 23 9 23Q16 23 17 31" stroke={WHITE} strokeWidth="2" />
              </Icon>
            </TaskButton>
            <TaskButton $w={38} aria-label="Gizli simgeleri göster"><Stroke w={26} h={16} d="M1 15L13 2L25 15" color={WHITE} width={2} /></TaskButton>
            <TaskButton $w={58} aria-label="Ağ">
              <Icon w={32} h={28}>
                <path d="M10 2H31V20H7M5 11V28M18 20V26M10 26H25M1 2H9V11H1Z" stroke={WHITE} strokeWidth="2" />
                <path d="M4 6h2v2h-2z" fill={WHITE} />
              </Icon>
            </TaskButton>
            <TaskButton $w={38} aria-label="Ses">
              <Icon w={34} h={28}>
                <path d="M1 9H6L12 2V26L6 19H1Z" stroke={WHITE} strokeWidth="2" />
                <path d="M17 9Q21 14 17 19" stroke={WHITE} strokeWidth="2" />
                <path d="M21 5Q28 14 21 23M26 1Q36 14 26 27" stroke="#77738c" strokeWidth="2" />
              </Icon>
            </TaskButton>
            <Clock>03:37<br />29.12.2018</Clock>
            <Notifications $w={92} aria-label="Bildirimler">
              <Icon w={32} h={32}><path d="M1 1H31V25H21L16 30L11 25H1Z" stroke={WHITE} strokeWidth="2" /></Icon>
            </Notifications>
            <ShowDesktop aria-label="Masaüstünü göster" />
          </Tray>
        </Taskbar>
      </Window>
    </>
  );
}
